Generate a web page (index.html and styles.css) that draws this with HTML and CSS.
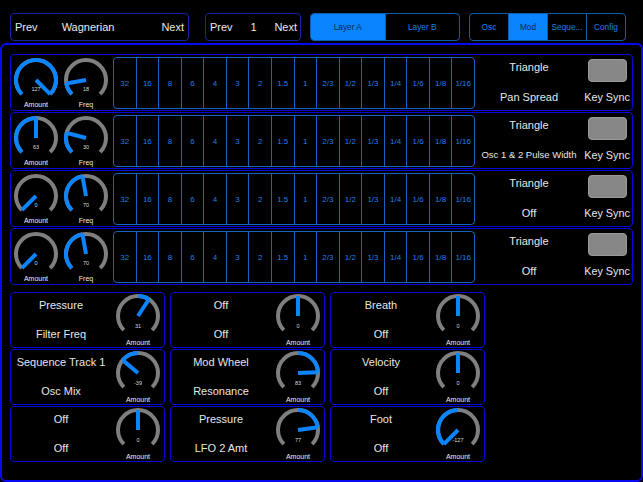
FILE: index.html
```html
<!DOCTYPE html>
<html>
<head>
<meta charset="utf-8">
<link rel="stylesheet" href="styles.css">
</head>
<body>
<div class="topbar">
  <div class="pbox pbox-patch"><span>Prev</span><span class="pname">Wagnerian</span><span class="spacer"></span><span>Next</span></div>
  <div class="pbox pbox-num"><span>Prev</span><span>1</span><span>Next</span></div>
  <div class="seg seg-layer"><div class="segi on">Layer A</div><div class="segi">Layer B</div></div>
  <div class="seg seg-tab"><div class="segi">Osc</div><div class="segi on">Mod</div><div class="segi">Seque...</div><div class="segi">Config</div></div>
</div>
<div class="panel">
  <div class="lfos">
    <div class="lfo">
      <svg class="knob" viewBox="0 0 50 55" width="50" height="55"><path class="track" d="M10.86 39.14A20 20 0 1 1 39.14 39.14"/><path class="fill" d="M10.86 39.14A20 20 0 1 1 39.14 39.14"/><line class="needle" x1="25" y1="25" x2="39.14" y2="39.14"/><text class="kv" x="25" y="36">127</text><text class="kl" x="25" y="51.5">Amount</text></svg>
      <svg class="knob" viewBox="0 0 50 55" width="50" height="55"><path class="track" d="M10.86 39.14A20 20 0 1 1 39.14 39.14"/><path class="fill" d="M10.86 39.14A20 20 0 0 1 5.30 28.47"/><line class="needle" x1="25" y1="25" x2="5.30" y2="28.47"/><text class="kv" x="25" y="36">18</text><text class="kl" x="25" y="51.5">Freq</text></svg>
      <div class="rates"><div class="rate">32</div><div class="rate">16</div><div class="rate">8</div><div class="rate">6</div><div class="rate">4</div><div class="rate">3</div><div class="rate">2</div><div class="rate">1.5</div><div class="rate">1</div><div class="rate">2/3</div><div class="rate">1/2</div><div class="rate">1/3</div><div class="rate">1/4</div><div class="rate">1/6</div><div class="rate">1/8</div><div class="rate">1/16</div></div>
      <div class="lfo-text"><div>Triangle</div><div class="dest">Pan Spread</div></div>
      <div class="sync"><div class="toggle"></div><div class="sync-l">Key Sync</div></div>
    </div>
    <div class="lfo">
      <svg class="knob" viewBox="0 0 50 55" width="50" height="55"><path class="track" d="M10.86 39.14A20 20 0 1 1 39.14 39.14"/><path class="fill" d="M10.86 39.14A20 20 0 0 1 25 5"/><line class="needle" x1="25" y1="25" x2="25" y2="5"/><text class="kv" x="25" y="36">63</text><text class="kl" x="25" y="51.5">Amount</text></svg>
      <svg class="knob" viewBox="0 0 50 55" width="50" height="55"><path class="track" d="M10.86 39.14A20 20 0 1 1 39.14 39.14"/><path class="fill" d="M10.86 39.14A20 20 0 0 1 5.68 19.82"/><line class="needle" x1="25" y1="25" x2="5.68" y2="19.82"/><text class="kv" x="25" y="36">30</text><text class="kl" x="25" y="51.5">Freq</text></svg>
      <div class="rates"><div class="rate">32</div><div class="rate">16</div><div class="rate">8</div><div class="rate">6</div><div class="rate">4</div><div class="rate">3</div><div class="rate">2</div><div class="rate">1.5</div><div class="rate">1</div><div class="rate">2/3</div><div class="rate">1/2</div><div class="rate">1/3</div><div class="rate">1/4</div><div class="rate">1/6</div><div class="rate">1/8</div><div class="rate">1/16</div></div>
      <div class="lfo-text"><div>Triangle</div><div class="dest dest-small">Osc 1 &amp; 2 Pulse Width</div></div>
      <div class="sync"><div class="toggle"></div><div class="sync-l">Key Sync</div></div>
    </div>
    <div class="lfo">
      <svg class="knob" viewBox="0 0 50 55" width="50" height="55"><path class="track" d="M10.86 39.14A20 20 0 1 1 39.14 39.14"/><line class="needle" x1="25" y1="25" x2="10.86" y2="39.14"/><text class="kv" x="25" y="36">0</text><text class="kl" x="25" y="51.5">Amount</text></svg>
      <svg class="knob" viewBox="0 0 50 55" width="50" height="55"><path class="track" d="M10.86 39.14A20 20 0 1 1 39.14 39.14"/><path class="fill" d="M10.86 39.14A20 20 0 0 1 21.53 5.30"/><line class="needle" x1="25" y1="25" x2="21.53" y2="5.30"/><text class="kv" x="25" y="36">70</text><text class="kl" x="25" y="51.5">Freq</text></svg>
      <div class="rates"><div class="rate">32</div><div class="rate">16</div><div class="rate">8</div><div class="rate">6</div><div class="rate">4</div><div class="rate">3</div><div class="rate">2</div><div class="rate">1.5</div><div class="rate">1</div><div class="rate">2/3</div><div class="rate">1/2</div><div class="rate">1/3</div><div class="rate">1/4</div><div class="rate">1/6</div><div class="rate">1/8</div><div class="rate">1/16</div></div>
      <div class="lfo-text"><div>Triangle</div><div class="dest">Off</div></div>
      <div class="sync"><div class="toggle"></div><div class="sync-l">Key Sync</div></div>
    </div>
    <div class="lfo">
      <svg class="knob" viewBox="0 0 50 55" width="50" height="55"><path class="track" d="M10.86 39.14A20 20 0 1 1 39.14 39.14"/><line class="needle" x1="25" y1="25" x2="10.86" y2="39.14"/><text class="kv" x="25" y="36">0</text><text class="kl" x="25" y="51.5">Amount</text></svg>
      <svg class="knob" viewBox="0 0 50 55" width="50" height="55"><path class="track" d="M10.86 39.14A20 20 0 1 1 39.14 39.14"/><path class="fill" d="M10.86 39.14A20 20 0 0 1 21.53 5.30"/><line class="needle" x1="25" y1="25" x2="21.53" y2="5.30"/><text class="kv" x="25" y="36">70</text><text class="kl" x="25" y="51.5">Freq</text></svg>
      <div class="rates"><div class="rate">32</div><div class="rate">16</div><div class="rate">8</div><div class="rate">6</div><div class="rate">4</div><div class="rate">3</div><div class="rate">2</div><div class="rate">1.5</div><div class="rate">1</div><div class="rate">2/3</div><div class="rate">1/2</div><div class="rate">1/3</div><div class="rate">1/4</div><div class="rate">1/6</div><div class="rate">1/8</div><div class="rate">1/16</div></div>
      <div class="lfo-text"><div>Triangle</div><div class="dest">Off</div></div>
      <div class="sync"><div class="toggle"></div><div class="sync-l">Key Sync</div></div>
    </div>
  </div>

  <div class="mods">
    <div class="mod">
      <div class="mod-text"><div>Pressure</div><div class="dest">Filter Freq</div></div>
      <svg class="mknob" viewBox="0 0 50 56" width="50" height="56"><path class="track" d="M10.86 39.14A20 20 0 1 1 39.14 39.14"/><path class="fill" d="M25 5A20 20 0 0 1 35.89 8.23"/><line class="needle" x1="25" y1="25" x2="35.89" y2="8.23"/><text class="kv" x="25" y="37">31</text><text class="kl" x="25" y="53.5">Amount</text></svg>
    </div>
    <div class="mod">
      <div class="mod-text"><div>Off</div><div class="dest">Off</div></div>
      <svg class="mknob" viewBox="0 0 50 56" width="50" height="56"><path class="track" d="M10.86 39.14A20 20 0 1 1 39.14 39.14"/><line class="needle" x1="25" y1="25" x2="25" y2="5"/><text class="kv" x="25" y="37">0</text><text class="kl" x="25" y="53.5">Amount</text></svg>
    </div>
    <div class="mod">
      <div class="mod-text"><div>Breath</div><div class="dest">Off</div></div>
      <svg class="mknob" viewBox="0 0 50 56" width="50" height="56"><path class="track" d="M10.86 39.14A20 20 0 1 1 39.14 39.14"/><line class="needle" x1="25" y1="25" x2="25" y2="5"/><text class="kv" x="25" y="37">0</text><text class="kl" x="25" y="53.5">Amount</text></svg>
    </div>
    <div class="mod">
      <div class="mod-text"><div>Sequence Track 1</div><div class="dest">Osc Mix</div></div>
      <svg class="mknob" viewBox="0 0 50 56" width="50" height="56"><path class="track" d="M10.86 39.14A20 20 0 1 1 39.14 39.14"/><path class="fill" d="M9.68 12.14A20 20 0 0 1 25 5"/><line class="needle" x1="25" y1="25" x2="9.68" y2="12.14"/><text class="kv" x="25" y="37">-39</text><text class="kl" x="25" y="53.5">Amount</text></svg>
    </div>
    <div class="mod">
      <div class="mod-text"><div>Mod Wheel</div><div class="dest">Resonance</div></div>
      <svg class="mknob" viewBox="0 0 50 56" width="50" height="56"><path class="track" d="M10.86 39.14A20 20 0 1 1 39.14 39.14"/><path class="fill" d="M25 5A20 20 0 0 1 44.99 24.37"/><line class="needle" x1="25" y1="25" x2="44.99" y2="24.37"/><text class="kv" x="25" y="37">83</text><text class="kl" x="25" y="53.5">Amount</text></svg>
    </div>
    <div class="mod">
      <div class="mod-text"><div>Velocity</div><div class="dest">Off</div></div>
      <svg class="mknob" viewBox="0 0 50 56" width="50" height="56"><path class="track" d="M10.86 39.14A20 20 0 1 1 39.14 39.14"/><line class="needle" x1="25" y1="25" x2="25" y2="5"/><text class="kv" x="25" y="37">0</text><text class="kl" x="25" y="53.5">Amount</text></svg>
    </div>
    <div class="mod">
      <div class="mod-text"><div>Off</div><div class="dest">Off</div></div>
      <svg class="mknob" viewBox="0 0 50 56" width="50" height="56"><path class="track" d="M10.86 39.14A20 20 0 1 1 39.14 39.14"/><line class="needle" x1="25" y1="25" x2="25" y2="5"/><text class="kv" x="25" y="37">0</text><text class="kl" x="25" y="53.5">Amount</text></svg>
    </div>
    <div class="mod">
      <div class="mod-text"><div>Pressure</div><div class="dest">LFO 2 Amt</div></div>
      <svg class="mknob" viewBox="0 0 50 56" width="50" height="56"><path class="track" d="M10.86 39.14A20 20 0 1 1 39.14 39.14"/><path class="fill" d="M25 5A20 20 0 0 1 44.80 22.18"/><line class="needle" x1="25" y1="25" x2="44.80" y2="22.18"/><text class="kv" x="25" y="37">77</text><text class="kl" x="25" y="53.5">Amount</text></svg>
    </div>
    <div class="mod">
      <div class="mod-text"><div>Foot</div><div class="dest">Off</div></div>
      <svg class="mknob" viewBox="0 0 50 56" width="50" height="56"><path class="track" d="M10.86 39.14A20 20 0 1 1 39.14 39.14"/><path class="fill" d="M10.86 39.14A20 20 0 0 1 25 5"/><line class="needle" x1="25" y1="25" x2="10.86" y2="39.14"/><text class="kv" x="25" y="37">-127</text><text class="kl" x="25" y="53.5">Amount</text></svg>
    </div>
  </div>
</div>
</body>
</html>
```

FILE: styles.css
```css
* { box-sizing: border-box; }
html, body {
  margin: 0;
  padding: 0;
  background: #000;
  color: #e6e6e6;
  font-family: "Liberation Sans", Arial, sans-serif;
  font-size: 11px;
  width: 643px;
  height: 482px;
  overflow: hidden;
}

.topbar {
  height: 43px;
  padding: 13px 0 2px 10px;
  display: flex;
  align-items: flex-start;
}
.pbox {
  height: 28px;
  border: 1px solid #1424a6;
  border-radius: 4px;
  display: flex;
  align-items: center;
  font-size: 11px;
  color: #e8e8e8;
}
.pbox-patch {
  width: 179px;
  padding: 0 4px 0 4px;
}
.pname { margin-left: 24px; }
.spacer { flex: 1; }
.pbox-num {
  width: 96px;
  margin-left: 16px;
  padding: 0 3px 0 4px;
  justify-content: space-between;
}
.seg {
  height: 28px;
  margin-left: 9px;
  border: 1px solid #0b5db3;
  border-radius: 4px;
  display: flex;
  overflow: hidden;
  font-size: 8.3px;
}
.seg-layer { width: 150px; }
.seg-tab { width: 157px; }
.segi {
  flex: 1;
  display: flex;
  align-items: center;
  justify-content: center;
  color: #1b80ea;
  border-left: 1px solid #0b5db3;
  white-space: nowrap;
}
.segi:first-child { border-left: none; }
.segi.on {
  background: #0a84ff;
  color: #072a55;
}

.panel {
  height: 439px;
  border: 2px solid #0a0af0;
  border-radius: 6px;
  padding: 9px 0 0 8px;
}
.lfos {
  display: flex;
  flex-direction: column;
  gap: 1px;
  width: 623px;
}
.lfo {
  height: 57px;
  border: 1px solid #0808d6;
  border-radius: 4px;
  display: flex;
  align-items: flex-start;
}
.knob { display: block; flex: none; overflow: visible; }
.track { fill: none; stroke: #7f7f7f; stroke-width: 4; }
.fill { fill: none; stroke: #0a84ff; stroke-width: 4; }
.needle { stroke: #0a84ff; stroke-width: 4; }
.kv {
  fill: #d8d8d8;
  font-family: "Liberation Sans", Arial, sans-serif;
  font-size: 5.5px;
  text-anchor: middle;
}
.kl {
  fill: #ececec;
  font-family: "Liberation Sans", Arial, sans-serif;
  font-size: 7px;
  text-anchor: middle;
}

.rates {
  margin: 2px 0 0 2px;
  width: 362px;
  height: 52px;
  border: 1px solid #1661c2;
  border-radius: 4px;
  display: flex;
  flex: none;
}
.rate {
  flex: 1;
  border-left: 1px solid #1661c2;
  display: flex;
  align-items: center;
  justify-content: center;
  color: #1b7fe9;
  font-size: 8px;
}
.rate:first-child { border-left: none; }

.lfo-text {
  width: 108px;
  flex: none;
  padding-top: 5px;
  text-align: center;
  line-height: 14px;
  white-space: nowrap;
}
.lfo-text .dest { margin-top: 16px; }
.dest-small { font-size: 9.5px; }
.sync {
  flex: 1;
  padding-top: 4px;
  padding-right: 1px;
  display: flex;
  flex-direction: column;
  align-items: center;
}
.toggle {
  width: 39px;
  height: 23px;
  background: #878787;
  border: 1px solid #9a9a9a;
  border-radius: 4px;
}
.sync-l {
  margin-top: 8px;
  line-height: 14px;
  font-size: 10.8px;
  white-space: nowrap;
}

.mods {
  margin-top: 7px;
  display: grid;
  grid-template-columns: 155px 155px 155px;
  grid-auto-rows: 56px;
  column-gap: 5px;
  row-gap: 1px;
}
.mod {
  border: 1px solid #0808d6;
  border-radius: 4px;
  display: flex;
  align-items: flex-start;
}
.mod-text {
  width: 100px;
  flex: none;
  padding-top: 5px;
  text-align: center;
  line-height: 14px;
  white-space: nowrap;
}
.mod-text .dest { margin-top: 15px; }
.mknob {
  display: block;
  flex: none;
  margin: -2px 0 0 2px;
  overflow: visible;
}
```
